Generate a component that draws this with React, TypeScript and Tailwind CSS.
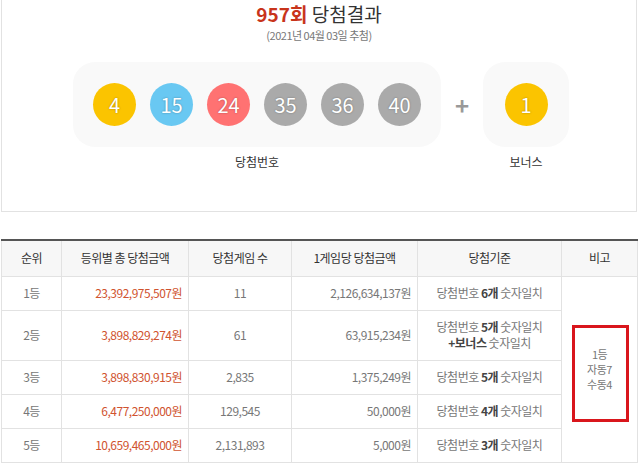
const font = { fontFamily: '"Noto Sans CJK KR", "Noto Sans", sans-serif' };

type Ball = { n: number; color: string };

const balls: Ball[] = [
  { n: 4, color: "bg-[#fbc400]" },
  { n: 15, color: "bg-[#69c8f2]" },
  { n: 24, color: "bg-[#ff7272]" },
  { n: 35, color: "bg-[#aaaaaa]" },
  { n: 36, color: "bg-[#aaaaaa]" },
  { n: 40, color: "bg-[#aaaaaa]" },
];

type Row = {
  rank: string;
  total: string;
  count: string;
  each: string;
  cond: string;
  extra?: string;
  tall?: boolean;
};

const rows: Row[] = [
  { rank: "1등", total: "23,392,975,507원", count: "11", each: "2,126,634,137원", cond: "6개" },
  { rank: "2등", total: "3,898,829,274원", count: "61", each: "63,915,234원", cond: "5개", extra: "+보너스", tall: true },
  { rank: "3등", total: "3,898,830,915원", count: "2,835", each: "1,375,249원", cond: "5개" },
  { rank: "4등", total: "6,477,250,000원", count: "129,545", each: "50,000원", cond: "4개" },
  { rank: "5등", total: "10,659,465,000원", count: "2,131,893", each: "5,000원", cond: "3개" },
];

function LottoBall({ n, color }: Ball) {
  return (
    <span
      className={`flex h-[43px] w-[43px] items-center justify-center rounded-full text-[20px] text-white [text-shadow:0_0_2px_rgba(0,0,0,0.35)] ${color}`}
    >
      {n}
    </span>
  );
}

export default function App() {
  return (
    <div className="min-h-[465px] bg-white pl-px" style={font}>
      <div className="w-[636px]">
        {/* draw result */}
        <section className="flex h-[212px] flex-col items-center border-x border-b border-[#e2e2e2]">
          <h2 className="mt-[1px] text-[19px] leading-[26px] text-[#333]">
            <span className="font-bold text-[#c8341b]">957회</span> 당첨결과
          </h2>
          <p className="text-[11px] leading-[16px] tracking-[-0.5px] text-[#777]">(2021년 04월 03일 추첨)</p>

          <div className="mt-[19px] flex w-full items-start pl-[71px]">
            <div className="flex flex-col items-center">
              <div className="flex h-[85px] w-[368px] items-center gap-[14px] rounded-[22px] bg-[#f9f9f9] px-[20px]">
                {balls.map((b) => (
                  <LottoBall key={b.n} {...b} />
                ))}
              </div>
              <p className="mt-[6px] text-[12px] text-[#333]">당첨번호</p>
            </div>
            <div className="flex h-[85px] w-[42px] items-center justify-center text-[24px] font-bold text-[#999]">
              +
            </div>
            <div className="flex flex-col items-center">
              <div className="flex h-[85px] w-[86px] items-center justify-center rounded-[22px] bg-[#f9f9f9]">
                <LottoBall n={1} color="bg-[#fbc400]" />
              </div>
              <p className="mt-[6px] text-[12px] text-[#333]">보너스</p>
            </div>
          </div>
        </section>

        {/* prize table */}
        <table className="mt-[27px] w-[636px] table-fixed border-collapse border-t-2 border-t-[#555] text-[12px] tracking-[-0.5px] text-[#777]">
          <colgroup>
            <col className="w-[60px]" />
            <col className="w-[127px]" />
            <col className="w-[103px]" />
            <col className="w-[126px]" />
            <col className="w-[144px]" />
            <col className="w-[76px]" />
          </colgroup>
          <thead>
            <tr className="h-[36px] bg-[#f7f7f7] text-[#333]">
              {["순위", "등위별 총 당첨금액", "당첨게임 수", "1게임당 당첨금액", "당첨기준", "비고"].map((h) => (
                <th key={h} className="border border-[#e2e2e2] font-normal">
                  {h}
                </th>
              ))}
            </tr>
          </thead>
          <tbody>
            {rows.map((r, i) => (
              <tr key={r.rank} className={r.tall ? "h-[50px]" : "h-[34px]"}>
                <td className="border border-[#e2e2e2] text-center">{r.rank}</td>
                <td className="border border-[#e2e2e2] pr-[6px] text-right text-[#d0532f]">{r.total}</td>
                <td className="border border-[#e2e2e2] text-center">{r.count}</td>
                <td className="border border-[#e2e2e2] pr-[6px] text-right">{r.each}</td>
                <td className="border border-[#e2e2e2] text-center leading-[16px]">
                  당첨번호 <b className="font-semibold text-[#444]">{r.cond}</b> 숫자일치
                  {r.extra && (
                    <>
                      <br />
                      <b className="font-semibold text-[#444]">{r.extra}</b> 숫자일치
                    </>
                  )}
                </td>
                {i === 0 && (
                  <td rowSpan={5} className="relative border border-[#e2e2e2] text-center text-[11px] leading-[15px]">
                    1등
                    <br />
                    자동7
                    <br />
                    수동4
                    <span className="absolute left-[10px] top-[48px] h-[97px] w-[57px] border-[3px] border-[#d9161c]" />
                  </td>
                )}
              </tr>
            ))}
          </tbody>
        </table>
      </div>
    </div>
  );
}
